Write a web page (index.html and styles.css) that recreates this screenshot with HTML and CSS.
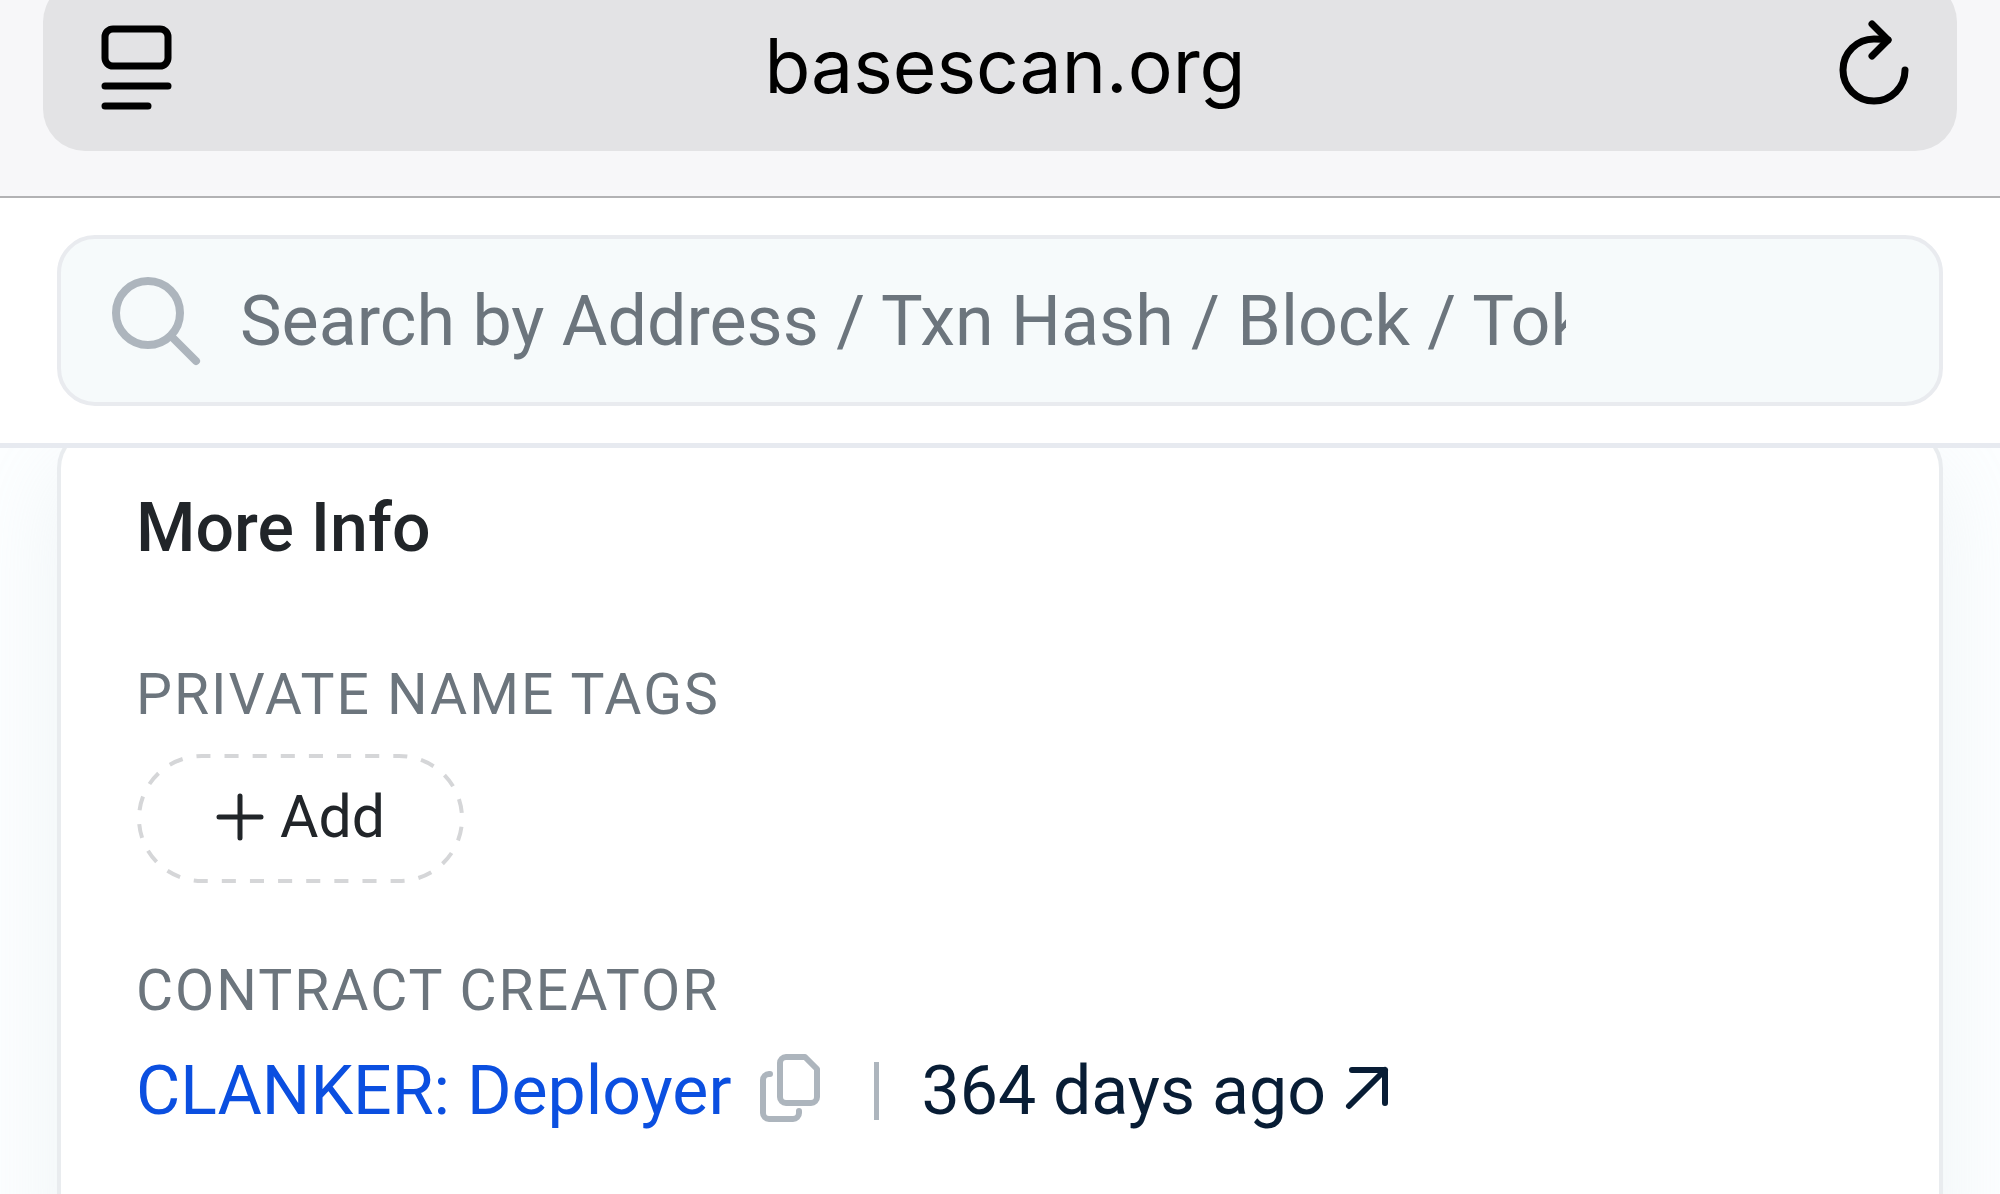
FILE: index.html
```html
<!DOCTYPE html>
<html lang="en">
<head>
<meta charset="utf-8">
<meta name="viewport" content="width=device-width, initial-scale=1">
<title>basescan.org</title>
<link rel="stylesheet" href="styles.css">
</head>
<body>

<div class="browser-bar">
  <div class="address">
    <button class="bar-btn" type="button" aria-label="Page menu">
      <svg width="72" height="86" viewBox="0 0 72 86" fill="none" stroke="#000" stroke-width="7" stroke-linecap="round">
        <rect x="4" y="6" width="63" height="37" rx="8"/>
        <path d="M4 63h63M4 83h43"/>
      </svg>
    </button>
    <span class="domain">basescan.org</span>
    <button class="bar-btn" type="button" aria-label="Reload">
      <svg width="72" height="86" viewBox="0 0 72 86" fill="none" stroke="#000" stroke-width="7" stroke-linecap="round" stroke-linejoin="round">
        <path d="M68 47A31 31 0 1 1 37 16Q45 16 51 17"/>
        <path d="M35 1l16 16-16 16"/>
      </svg>
    </button>
  </div>
</div>

<header class="header">
  <form class="search">
    <svg class="search-icon" width="88" height="88" viewBox="0 0 88 88" fill="none" stroke="#adb5bd" stroke-linecap="round">
      <circle cx="36" cy="36" r="32" stroke-width="8"/>
      <path d="M59 59l25 25" stroke-width="8"/>
    </svg>
    <input class="search-input" type="text" aria-label="Search" placeholder="Search by Address / Txn Hash / Block / Token">
  </form>
</header>

<main class="content">
  <section class="card">
    <h3 class="card-title">More Info</h3>

    <div class="item">
      <h4 class="label">Private Name Tags</h4>
      <button class="add-btn" type="button">
        <svg class="add-outline" width="100%" height="100%" fill="none" stroke="#d5d6d8" stroke-width="4">
          <rect class="add-outline-rect" x="3" y="3" rx="63" pathLength="280" stroke-dasharray="5 5" stroke-dashoffset="2"/>
        </svg>
        <svg width="48" height="48" viewBox="0 0 48 48" fill="none" stroke="#212529" stroke-width="5" stroke-linecap="round">
          <path d="M24 3v42M3 24h42"/>
        </svg>
        Add
      </button>
    </div>

    <div class="item">
      <h4 class="label">Contract Creator</h4>
      <div class="creator">
        <a class="link" href="#">CLANKER: Deployer</a>
        <button class="copy-btn" type="button" aria-label="Copy address">
          <svg width="60" height="68" viewBox="0 0 60 68" fill="none" stroke="#adb5bd" stroke-width="6" stroke-linecap="round" stroke-linejoin="round">
            <path d="M26 3h19l12 12v28a6 6 0 0 1-6 6H26a6 6 0 0 1-6-6V9a6 6 0 0 1 6-6z"/>
            <path d="M10 20H9a6 6 0 0 0-6 6v33a6 6 0 0 0 6 6h24a6 6 0 0 0 6-6v-2"/>
          </svg>
        </button>
        <span class="divider"></span>
        <a class="age" href="#">364 days ago
          <svg class="age-icon" width="42" height="42" viewBox="0 0 42 42" fill="none" stroke="#081d35" stroke-width="6" stroke-linecap="round" stroke-linejoin="round">
            <path d="M6 3h33v33M39 3L3 39"/>
          </svg>
        </a>
      </div>
    </div>
  </section>
</main>

</body>
</html>
```

FILE: styles.css
```css
* {
    box-sizing: border-box;
}

html, body {
    height: 100%;
}

body {
    margin: 0;
    display: flex;
    flex-direction: column;
    overflow: hidden;
    background-color: #fcfeff;
    font-family: Roboto, "Liberation Sans", sans-serif;
    font-size: 68px;
    line-height: 84px;
    color: #212529;
}

h3, h4 {
    margin: 0;
}

button {
    background: none;
    border: none;
    padding: 0;
    font: inherit;
    color: inherit;
    cursor: pointer;
}

svg {
    display: block;
    flex: none;
    overflow: visible;
}

a {
    text-decoration: none;
}

/* browser address bar */
.browser-bar {
    flex: none;
    overflow: hidden;
    padding: 0 43px 45px;
    background-color: #f7f7f9;
    border-bottom: 2px solid #b2b2b4;
}

.address {
    display: flex;
    align-items: center;
    justify-content: space-between;
    height: 171px;
    margin-top: -20px;
    padding: 0 48px 0 58px;
    border-radius: 42px;
    background-color: #e3e3e5;
}

.domain {
    font-family: Inter, "Liberation Sans", sans-serif;
    font-size: 75px;
    color: #000;
}

/* site header */
.header {
    position: relative;
    z-index: 1;
    flex: none;
    padding: 37px 57px;
    background-color: #fff;
    border-bottom: 5px solid #e7eaf0;
}

.search {
    display: flex;
    align-items: center;
    gap: 40px;
    height: 171px;
    padding: 0 373px 0 51px;
    border: 4px solid #e9ebef;
    border-radius: 38px;
    background-color: #f6fafb;
}

.search-input {
    flex: 1;
    min-width: 0;
    padding: 0;
    border: none;
    outline: none;
    background: none;
    font: inherit;
    font-size: 70px;
    color: #6c757d;
}

.search-input::placeholder {
    color: #6c757d;
    opacity: 1;
}

/* info card */
.content {
    flex: 1;
    display: flex;
    padding: 0 57px;
}

.card {
    flex: 1;
    margin-top: -20px;
    padding: 54px 75px;
    border: 4px solid #e9ecef;
    border-radius: 40px;
    border-bottom: none;
    border-bottom-left-radius: 0;
    border-bottom-right-radius: 0;
    background-color: #fff;
    box-shadow: 0 37px 89px rgba(189, 204, 209, 0.2);
}

.card-title {
    margin-bottom: 83px;
    font-size: 68px;
    font-weight: 500;
}

.item {
    margin-bottom: 65px;
}

.label {
    margin-bottom: 16px;
    font-size: 57px;
    font-weight: 400;
    letter-spacing: 2px;
    text-transform: uppercase;
    color: #6c757d;
}

.add-btn {
    position: relative;
    display: flex;
    align-items: center;
    gap: 16px;
    height: 131px;
    padding: 0 80px 4px;
    font-size: 59px;
}

/* long dashes, wider than border-style: dashed gives */
.add-outline {
    position: absolute;
    top: 0;
    left: 0;
}

.add-outline-rect {
    width: calc(100% - 6px);
    height: calc(100% - 6px);
}

.creator {
    display: flex;
    align-items: center;
}

.link {
    color: #0b4fe0;
}

.copy-btn {
    margin: 0 54px 6px 29px;
}

.divider {
    width: 5px;
    height: 58px;
    margin-right: 42px;
    background-color: #adb5bd;
}

.age {
    display: flex;
    align-items: center;
    gap: 20px;
    color: #081d35;
}

.age-icon {
    margin-bottom: 6px;
}
```
